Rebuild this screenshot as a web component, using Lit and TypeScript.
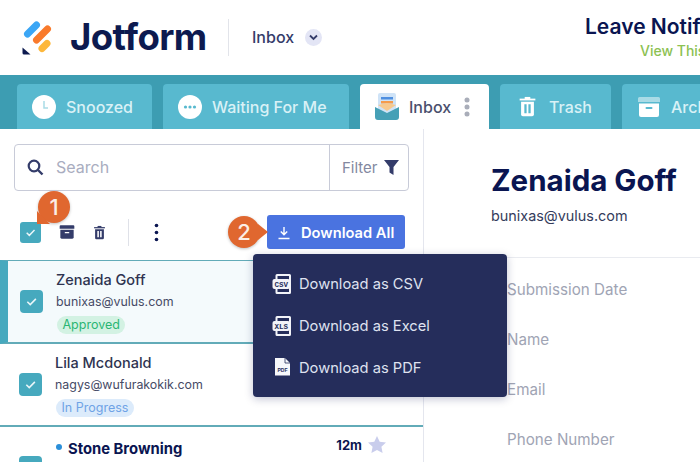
import { LitElement, html, css, svg } from "lit";
import { customElement } from "lit/decorators.js";

const tick = svg`<path d="M7 11.2l2.8 2.8L15.200 8.500" fill="none" stroke="#eaf6f9" stroke-width="1.500"/>`;

const trash = (c: string, bars: string) => svg`
  <path d="M4 5h14v1.6H4z" fill=${c}/><path d="M8.5 3.5h5v2h-5z" fill=${c}/>
  <path d="M5.3 7.8h11.4V19a1.6 1.6 0 0 1-1.6 1.6H6.9A1.6 1.6 0 0 1 5.3 19z" fill=${c}/>
  <path d="M8.2 10h2v8h-2zM11.8 10h2v8h-2z" fill=${bars}/>`;

const archive = (c: string, slot: string, top: string) => svg`
  <path d="M1 3.5A1.5 1.5 0 0 1 2.5 2h19A1.5 1.5 0 0 1 23 3.5V7H1z" fill=${top}/>
  <path d="M2 8.5h20V20a2 2 0 0 1-2 2H4a2 2 0 0 1-2-2z" fill=${c}/>
  <rect x="8.5" y="12" width="7" height="2" rx="1" fill=${slot}/>`;

// sheet with a label band that sticks out on the left
const fileBand = (label: string) => svg`
  <path d="M5 1h12.500A1.500 1.500 0 0 1 19 2.500V19.500A1.500 1.500 0 0 1 17.500 21H5a1.500 1.500 0 0 1-1.500-1.500V16h2v3h11.500V3H5.500v3h-2V2.500A1.500 1.500 0 0 1 5 1z" fill="#f2f3f8"/>
  <rect x="0.500" y="6" width="17.500" height="10" rx="2" fill="#f2f3f8"/>
  <text x="9.200" y="13.800" text-anchor="middle" font-size="7.500" font-weight="700" font-family="Liberation Mono" fill="#252d5b">${label}</text>`;

@customElement("app-root")
export class AppRoot extends LitElement {
  static styles = css`
    :host {
      display: block;
      position: relative;
      width: 700px;
      height: 462px;
      overflow: hidden;
      background: #fff;
      font-family: Inter, "Liberation Sans", sans-serif;
      color: #0a1551;
    }
    svg {
      display: block;
      flex: none;
    }

    .header {
      display: flex;
      align-items: center;
      height: 75px;
      padding-left: 22px;
      box-sizing: border-box;
    }
    .wordmark {
      font-size: 36.6px;
      font-weight: 700;
      letter-spacing: -0.6px;
      margin-left: 18px;
      width: 137px;
      flex: none;
      white-space: nowrap;
      color: #0d1a4f;
      line-height: 1;
    }
    .vrule {
      width: 1px;
      height: 37px;
      flex: none;
      background: #e2e4ea;
      margin: 0 23px 0 21px;
    }
    .crumb {
      font-size: 16px;
      font-weight: 500;
      margin-top: -1px;
      color: #343c6a;
    }
    .chev {
      width: 17px;
      height: 17px;
      border-radius: 50%;
      background: #e3e5f5;
      margin-left: 11px;
      display: flex;
      align-items: center;
      justify-content: center;
    }
    .title {
      margin-left: auto;
      margin-bottom: 2px;
      width: 115px;
      flex: none;
      white-space: nowrap;
    }
    .title b {
      display: block;
      font-size: 21px;
      font-weight: 600;
      line-height: 24px;
      color: #0a1551;
    }
    .title span {
      display: block;
      font-size: 14px;
      font-weight: 500;
      line-height: 16px;
      color: #8cc152;
      margin: 4px 0 0 55px;
    }

    .tabs {
      display: flex;
      gap: 11px;
      height: 54px;
      padding: 9px 0 0 17px;
      box-sizing: border-box;
      background: #3d9db2;
      overflow: hidden;
    }
    .tab {
      flex: none;
      display: flex;
      align-items: center;
      gap: 10px;
      padding-left: 15px;
      box-sizing: border-box;
      background: #58b9cf;
      border-radius: 4px 4px 0 0;
      color: #d9f1f6;
      font-size: 16px;
      font-weight: 500;
    }
    .tab.snoozed {
      width: 135px;
    }
    .tab.waiting {
      width: 186px;
    }
    .tab.active {
      width: 129px;
      background: #fff;
      color: #4a4f6d;
    }
    .tab.trash {
      width: 111px;
      gap: 9px;
    }
    .tab.arch {
      width: 120px;
    }
    .kebab {
      margin-left: 3px;
    }

    .body {
      display: flex;
      height: 333px;
    }
    .list {
      position: relative;
      width: 424px;
      flex: none;
      box-sizing: border-box;
      border-right: 1px solid #e4e6ee;
    }
    .search {
      display: flex;
      align-items: stretch;
      height: 47px;
      margin: 15px 14px 0;
      box-sizing: border-box;
      border: 1px solid #c8cbd8;
      border-radius: 4px;
    }
    .search-in {
      flex: 1;
      display: flex;
      align-items: center;
      gap: 12px;
      padding-left: 12px;
      padding-bottom: 1px;
      font-size: 16px;
      color: #a9adc0;
    }
    .filter {
      width: 79px;
      display: flex;
      align-items: center;
      gap: 6px;
      padding-left: 12px;
      box-sizing: border-box;
      border-left: 1px solid #c8cbd8;
      font-size: 15px;
      color: #8388a0;
    }

    .tools {
      display: flex;
      align-items: center;
      height: 34px;
      margin-top: 24px;
      padding: 0 18px 0 20px;
    }
    .check {
      width: 21px;
      height: 21px;
      flex: none;
      border-radius: 3px;
      background: #46a9be;
    }
    .tools .archive {
      margin-left: 18px;
    }
    .tools .bin {
      margin-left: 16px;
    }
    .tools .rule {
      width: 1px;
      height: 27px;
      background: #dfe1e8;
      margin: 0 25px 0 20px;
    }
    .dl {
      margin-left: auto;
      display: flex;
      align-items: center;
      gap: 10px;
      width: 138px;
      height: 34px;
      padding: 1px 0 0 10px;
      box-sizing: border-box;
      background: #4a73e0;
      border-radius: 3px;
      color: #fff;
      font-size: 14.7px;
      font-weight: 600;
    }

    .rows {
      margin-top: 11px;
    }
    .row {
      position: relative;
      display: flex;
      align-items: center;
      gap: 13px;
      height: 83px;
      padding-left: 19px;
      box-sizing: border-box;
      border-bottom: 2px solid #62abb8;
    }
    .row.current {
      height: 84px;
      padding-left: 12px;
      border-top: 1px solid #62abb8;
      border-left: 8px solid #46a9be;
      background: #f4fafc;
    }
    .row .check {
      width: 23px;
      height: 23px;
      border-radius: 4px;
    }
    .name {
      font-size: 14.5px;
      font-weight: 500;
      line-height: 20px;
      color: #2e3350;
    }
    .mail {
      font-size: 12.4px;
      line-height: 20px;
      margin-top: 2px;
      color: #464b66;
    }
    .pill {
      display: inline-block;
      font-size: 12.5px;
      line-height: 18px;
      padding: 0 5.5px;
      margin-top: 4px;
      border-radius: 9px;
    }
    .pill.ok {
      color: #2bb673;
      background: #d3f2e3;
      margin-left: 1px;
    }
    .pill.wip {
      color: #6fa3e6;
      background: #dcebfb;
      margin-left: 1px;
    }
    .row.last {
      border: 0;
      align-items: flex-start;
      padding-top: 12px;
    }
    .row.last .check {
      margin-top: 17px;
    }
    .row.last .name {
      font-size: 14.8px;
      font-weight: 700;
      color: #0a1551;
      display: flex;
      align-items: center;
      gap: 6px;
    }
    .row.last .name i {
      width: 6px;
      height: 6px;
      border-radius: 50%;
      background: #2b8fd9;
      margin: -4px 0 0 1px;
    }
    .row.last .mail {
      margin-top: 0;
    }
    .stamp {
      position: absolute;
      top: 9px;
      right: 37px;
      display: flex;
      align-items: center;
      gap: 6px;
      font-size: 13px;
      font-weight: 700;
      color: #0a1551;
    }

    .detail {
      flex: 1;
    }
    .who {
      height: 129px;
      padding: 33px 0 0 67px;
      box-sizing: border-box;
      border-bottom: 1px solid #e9ebf0;
    }
    .who h1 {
      margin: 0;
      font-size: 29.5px;
      font-weight: 700;
      line-height: 36px;
      color: #0a1551;
    }
    .who p {
      margin: 8px 0 0;
      font-size: 14.4px;
      line-height: 20px;
      color: #343c5c;
    }
    .fields {
      display: flex;
      flex-direction: column;
      gap: 32px;
      padding: 22.5px 0 0 83px;
      font-size: 15.2px;
      line-height: 18.2px;
      color: #a0a4b4;
    }

    .menu {
      position: absolute;
      left: 253px;
      top: 125px;
      width: 254px;
      height: 143px;
      padding-top: 9px;
      box-sizing: border-box;
      background: #252d5b;
      border-radius: 4px;
      box-shadow: 0 2px 8px rgba(10, 21, 81, 0.25);
    }
    .item {
      display: flex;
      align-items: center;
      gap: 7px;
      height: 42px;
      padding-left: 19px;
      font-size: 14.7px;
      color: #dfe2f0;
    }

    .mark {
      position: absolute;
      width: 32px;
      height: 32px;
      border-radius: 50%;
      background: #e0672f;
      color: #fbeee6;
      font-size: 22px;
      font-weight: 500;
      display: flex;
      align-items: center;
      justify-content: center;
      box-shadow: 0 1px 3px rgba(0, 0, 0, 0.25);
    }
    .mark::after {
      content: "";
      position: absolute;
      border-style: solid;
    }
    .mark.one {
      left: 38px;
      top: 191px;
    }
    .mark.one::after {
      left: -1px;
      bottom: -1px;
      border-width: 13px 0 0 13px;
      border-color: transparent transparent transparent #e0672f;
    }
    .mark.two {
      left: 228px;
      top: 216px;
    }
    .mark.two::after {
      right: -8px;
      top: 8px;
      border-width: 8px 0 8px 10px;
      border-color: transparent transparent transparent #e0672f;
    }
  `;

  render() {
    return html`
      <div class="header">
        <svg width="30" height="34" viewBox="22 20 30 34">
          <path d="M27.5 33l9-9" stroke="#3ba6f5" stroke-width="7" stroke-linecap="round"/>
          <path d="M36.5 39l11-11" stroke="#f97a2b" stroke-width="7" stroke-linecap="round"/>
          <path d="M42 47.5l5-5" stroke="#fdb73b" stroke-width="7" stroke-linecap="round"/>
          <path d="M22.5 46.5l8 7H24a1.5 1.5 0 0 1-1.500-1.500z" fill="#0d1a4f"/>
        </svg>
        <div class="wordmark">Jotform</div>
        <div class="vrule"></div>
        <div class="crumb">Inbox</div>
        <div class="chev">
          <svg width="9" height="7" viewBox="0 0 9 7">
            <path d="M1 1.500l3.500 3.500L8 1.500" fill="none" stroke="#343c6a" stroke-width="1.800"/>
          </svg>
        </div>
        <div class="title"><b>Leave Notif</b><span>View This</span></div>
      </div>

      <div class="tabs">
        <div class="tab snoozed">
          <svg width="24" height="24" viewBox="0 0 24 24">
            <circle cx="12" cy="12" r="12" fill="#fff"/>
            <path d="M12 6v7h4" fill="none" stroke="#a9dbe6" stroke-width="1.500"/>
          </svg>
          Snoozed
        </div>
        <div class="tab waiting">
          <svg width="24" height="24" viewBox="0 0 24 24">
            <circle cx="12" cy="12" r="12" fill="#fff"/>
            <circle cx="7.500" cy="12" r="1.600" fill="#58b9cf"/>
            <circle cx="12" cy="12" r="1.600" fill="#58b9cf"/>
            <circle cx="16.500" cy="12" r="1.600" fill="#58b9cf"/>
          </svg>
          Waiting For Me
        </div>
        <div class="tab active">
          <svg width="24" height="27" viewBox="0 0 24 27">
            <rect x="3" y="0" width="18" height="20" rx="2" fill="#cfe3f7"/>
            <rect x="6" y="4" width="12" height="2.500" fill="#4f8fe0"/>
            <rect x="6" y="8" width="12" height="2.500" fill="#f59b4c"/>
            <path d="M0 14l12 6 12-6v10a3 3 0 0 1-3 3H3a3 3 0 0 1-3-3z" fill="#46a0b6"/>
            <path d="M3 12l9 6 9-6-9-2z" fill="#f7c98f"/>
          </svg>
          Inbox
          <svg class="kebab" width="6" height="20" viewBox="0 0 6 20">
            <circle cx="3" cy="3" r="2.500" fill="#a9adb9"/>
            <circle cx="3" cy="10" r="2.500" fill="#a9adb9"/>
            <circle cx="3" cy="17" r="2.500" fill="#a9adb9"/>
          </svg>
        </div>
        <div class="tab trash">
          <svg width="25" height="27" viewBox="0 0 22 24">${trash("#fff", "#58b9cf")}</svg>
          Trash
        </div>
        <div class="tab arch">
          <svg width="24" height="24" viewBox="0 0 24 24">${archive("#fff", "#58b9cf", "#a9dbe6")}</svg>
          Archive
        </div>
      </div>

      <div class="body">
        <div class="list">
          <div class="search">
            <div class="search-in">
              <svg width="17" height="17" viewBox="0 0 17 17">
                <circle cx="7" cy="7" r="5.300" fill="none" stroke="#343c6a" stroke-width="2.200"/>
                <path d="M11 11l4.500 4.500" stroke="#343c6a" stroke-width="2.400"/>
              </svg>
              Search
            </div>
            <div class="filter">
              Filter
              <svg width="15" height="15" viewBox="0 0 15 15">
                <path d="M0 0h15L9.500 7v8l-4-2.500V7z" fill="#343c6a"/>
              </svg>
            </div>
          </div>

          <div class="tools">
            <svg class="check" viewBox="0 0 22 22">${tick}</svg>
            <svg class="archive" width="16" height="16" viewBox="0 0 24 24">${archive("#343c6a", "#fff", "#343c6a")}</svg>
            <svg class="bin" width="17" height="19" viewBox="0 0 22 24">${trash("#343c6a", "#fff")}</svg>
            <div class="rule"></div>
            <svg width="5" height="19" viewBox="0 0 5 19">
              <circle cx="2.500" cy="2.500" r="1.800" fill="#0a1551"/>
              <circle cx="2.500" cy="9.500" r="1.800" fill="#0a1551"/>
              <circle cx="2.500" cy="16.500" r="1.800" fill="#0a1551"/>
            </svg>
            <div class="dl">
              <svg width="14" height="14" viewBox="0 0 14 14">
                <path d="M7 1v7.500M3.800 5.500L7 8.700l3.200-3.200M1.500 12.500h11" fill="none" stroke="#fff" stroke-width="1.400"/>
              </svg>
              Download All
            </div>
          </div>

          <div class="rows">
            <div class="row current">
              <svg class="check" viewBox="0 0 22 22">${tick}</svg>
              <div>
                <div class="name">Zenaida Goff</div>
                <div class="mail">bunixas@vulus.com</div>
                <span class="pill ok">Approved</span>
              </div>
            </div>
            <div class="row">
              <svg class="check" viewBox="0 0 22 22">${tick}</svg>
              <div>
                <div class="name">Lila Mcdonald</div>
                <div class="mail">nagys@wufurakokik.com</div>
                <span class="pill wip">In Progress</span>
              </div>
            </div>
            <div class="row last">
              <svg class="check" viewBox="0 0 22 22">${tick}</svg>
              <div>
                <div class="name"><i></i>Stone Browning</div>
                <div class="mail">lusdullus@mail.com</div>
              </div>
              <div class="stamp">
                12m
                <svg width="18" height="17" viewBox="0 0 18 17">
                  <path d="M9 0l2.700 5.700 6.300.8-4.600 4.300 1.200 6.200L9 14l-5.600 3 1.200-6.200L0 6.500l6.300-.8z" fill="#c9cdec"/>
                </svg>
              </div>
            </div>
          </div>

          <div class="menu">
            <div class="item">
              <svg width="20" height="22" viewBox="0 0 20 22">${fileBand("CSV")}</svg>
              Download as CSV
            </div>
            <div class="item">
              <svg width="20" height="22" viewBox="0 0 20 22">${fileBand("XLS")}</svg>
              Download as Excel
            </div>
            <div class="item">
              <svg width="20" height="22" viewBox="0 0 20 22">
                <path d="M3 1h10l5 5v12.500H3z" fill="#f7f8fb"/>
                <path d="M13 1v5h5" fill="none" stroke="#252d5b" stroke-width="0.800"/>
                <text x="10.500" y="14.500" text-anchor="middle" font-size="5" font-weight="700" font-family="Liberation Sans" fill="#252d5b">PDF</text>
              </svg>
              Download as PDF
            </div>
          </div>
        </div>

        <div class="detail">
          <div class="who">
            <h1>Zenaida Goff</h1>
            <p>bunixas@vulus.com</p>
          </div>
          <div class="fields">
            <div>Submission Date</div>
            <div>Name</div>
            <div>Email</div>
            <div>Phone Number</div>
          </div>
        </div>
      </div>

      <div class="mark one">1</div>
      <div class="mark two">2</div>
    `;
  }
}
